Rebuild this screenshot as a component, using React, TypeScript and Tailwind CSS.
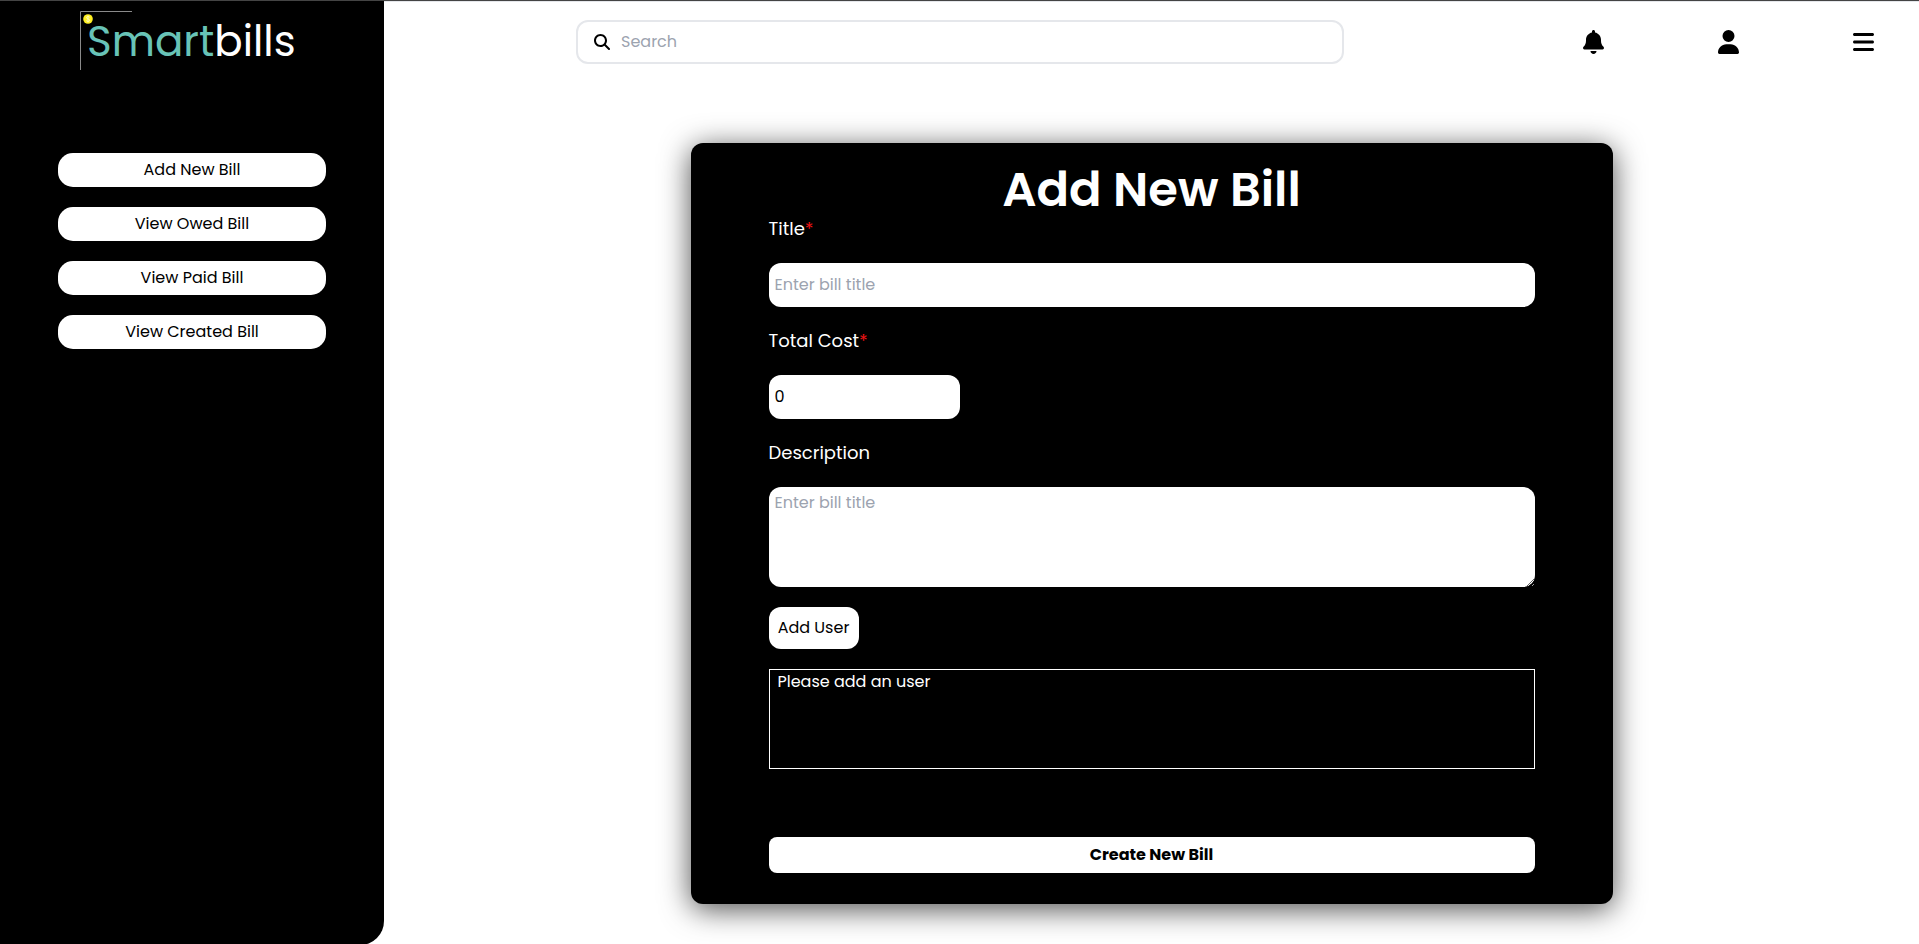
import { FaBell, FaUser, FaBars, FaMagnifyingGlass } from "react-icons/fa6";

const navItems = ["Add New Bill", "View Owed Bill", "View Paid Bill", "View Created Bill"];

function Logo() {
  return (
    <div className="relative mt-[10px] h-[59px] w-[224px] pl-[7px] text-[42px] leading-[61px]">
      <svg className="absolute left-0 top-0" width="52" height="59" viewBox="0 0 52 59" fill="none">
        <path d="M0.5 59V0.5H52" stroke="#8a8a8a" />
        <circle cx="8" cy="8" r="4.8" fill="#fff022" />
        <path d="M9.8 6.3C9 5.2 6.4 5.3 6.5 6.8C6.6 8.2 9.7 7.7 9.7 9.2C9.7 10.8 7 10.7 6.2 9.6M8 4.6V11.4" stroke="#fffbc4" strokeWidth="0.9" />
      </svg>
      <span className="text-[#68c3b7]">Smart</span>
      <span className="text-white">bills</span>
    </div>
  );
}

function Sidebar() {
  return (
    <aside className="flex w-96 shrink-0 flex-col items-center rounded-br-3xl bg-black">
      <Logo />
      <nav className="mt-[83px] flex w-[268px] flex-col gap-5">
        {navItems.map((label) => (
          <button key={label} className="h-[34px] rounded-[15px] bg-white text-base">
            {label}
          </button>
        ))}
      </nav>
    </aside>
  );
}

function TopBar() {
  return (
    <header className="flex h-20 items-center border-t border-gray-200 pl-48">
      <label className="flex h-11 w-[768px] items-center rounded-xl border-2 border-gray-200 pl-4">
        <FaMagnifyingGlass className="size-4" />
        <input
          placeholder="Search"
          className="ml-[11px] flex-1 bg-transparent text-base outline-none placeholder:text-[#9ca3af]"
        />
      </label>
      <div className="ml-[239px] flex w-[291px] items-center justify-between text-2xl">
        <FaBell className="w-[21px]" />
        <FaUser className="w-[21px]" />
        <FaBars className="w-[21px]" />
      </div>
    </header>
  );
}

function FieldLabel({ text, required }: { text: string; required?: boolean }) {
  return (
    <label className="block text-lg leading-7 text-white">
      {text}
      {required && <span className="text-[#f01414]">*</span>}
    </label>
  );
}

function BillForm() {
  return (
    <form className="flex h-[761px] w-[922px] flex-col rounded-xl bg-black px-[78px] pt-[23px] shadow-[0_5px_30px_rgba(0,0,0,0.7)]">
      <h1 className="mb-px text-center text-5xl font-semibold text-white">Add New Bill</h1>
      <FieldLabel text="Title" required />
      <input
        placeholder="Enter bill title"
        className="mt-5 h-11 shrink-0 rounded-xl bg-white px-1.5 pb-0.5 text-base outline-none placeholder:text-[#9ca3af]"
      />
      <div className="mt-5">
        <FieldLabel text="Total Cost" required />
      </div>
      <input
        defaultValue="0"
        className="mt-5 h-11 w-[191px] shrink-0 rounded-xl bg-white px-1.5 pb-0.5 text-base outline-none"
      />
      <div className="mt-5">
        <FieldLabel text="Description" />
      </div>
      <textarea
        placeholder="Enter bill title"
        className="mt-5 h-[100px] shrink-0 rounded-xl bg-white px-1.5 py-1 text-base outline-none placeholder:text-[#9ca3af]"
      />
      <button type="button" className="mt-5 h-[42px] w-[90px] shrink-0 rounded-xl bg-white text-base">
        Add User
      </button>
      <div className="mt-5 h-[100px] shrink-0 border border-white px-2 text-base text-white">
        Please add an user
      </div>
      <button type="button" className="mt-[68px] h-9 shrink-0 rounded-lg bg-white text-base font-bold">
        Create New Bill
      </button>
    </form>
  );
}

export default function App() {
  return (
    <div className="flex h-[944px] flex-col overflow-hidden bg-white font-['Poppins','Inter',sans-serif] text-black">
      <div className="h-px shrink-0 bg-[#444444]" />
      <div className="flex h-[944px] shrink-0">
        <Sidebar />
        <main className="flex flex-1 flex-col">
          <TopBar />
          <div className="flex justify-center pt-[62px]">
            <BillForm />
          </div>
        </main>
      </div>
    </div>
  );
}
